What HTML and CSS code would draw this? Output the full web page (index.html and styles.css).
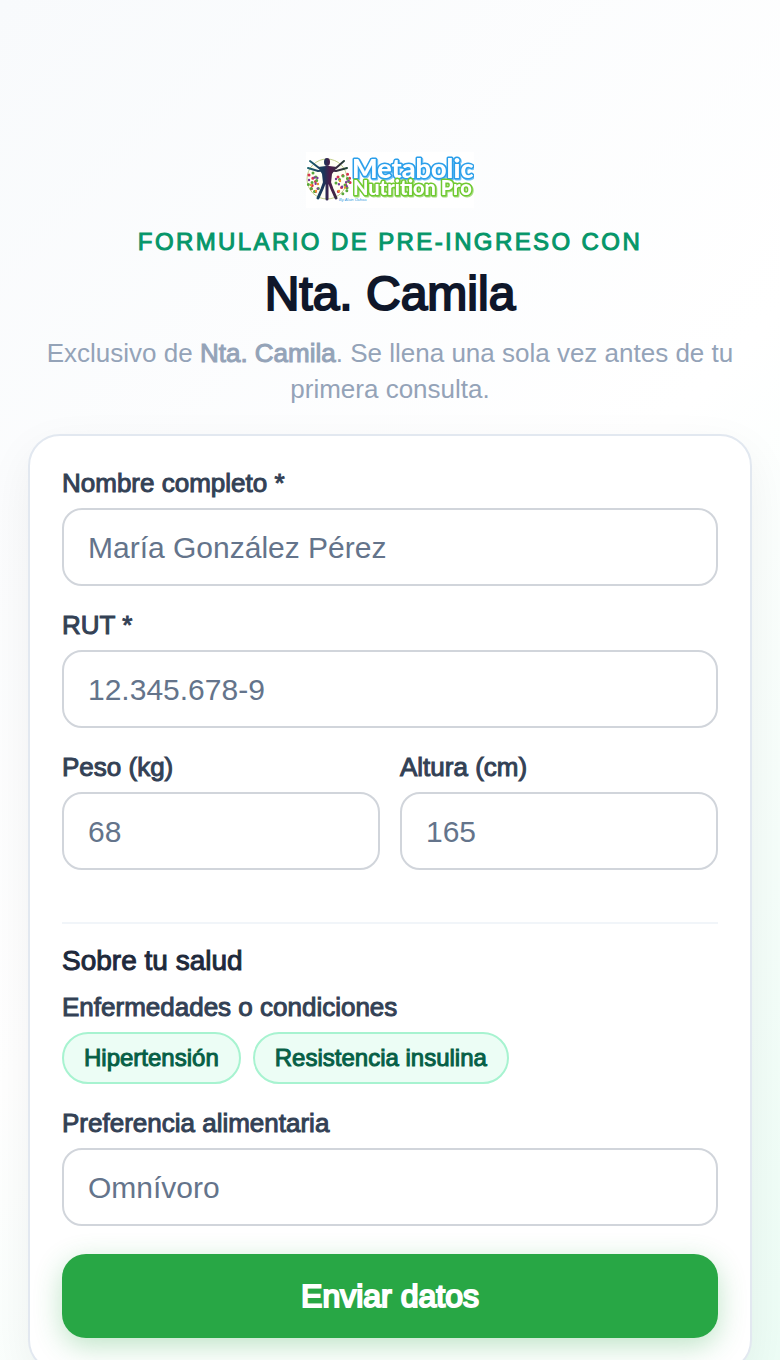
FILE: index.html
```
<!DOCTYPE html>
<html lang="es">
<head>
  <meta charset="UTF-8">
  <meta name="viewport" content="width=device-width, initial-scale=1.0">
  <title>Formulario de pre-ingreso</title>
  <link rel="stylesheet" href="styles.css">
</head>
<body>

  <main class="page">
    <header class="intro">
      <svg class="logo" viewBox="0 0 168 56" role="img" aria-label="Metabolic Nutrition Pro">
        <defs>
          <linearGradient id="bodyColor" gradientUnits="userSpaceOnUse" x1="2" x2="42" y1="0" y2="0">
            <stop offset="0" stop-color="#1d6470"/>
            <stop offset="0.4" stop-color="#1c3358"/>
            <stop offset="0.55" stop-color="#4b1c4a"/>
            <stop offset="1" stop-color="#1b4a34"/>
          </linearGradient>
        </defs>
        <rect width="168" height="56" fill="#fff"/>
        <circle cx="21" cy="27" r="20" fill="#fffef4" stroke="#c2cf8a" stroke-width="1"/>
        <!-- food dots -->
        <g fill="none" stroke-linecap="round">
          <path stroke="#d8324d" stroke-width="3" stroke-dasharray="0 5" d="M3 23l7 6-6 7 8 5M32 25l10-3 3 8-9 5-5 6"/>
          <path stroke="#58a839" stroke-width="3" stroke-dasharray="0 5" d="M7 21l5 7-10 4 6 8 5-4M30 31l7-7 7 4-6 6 5 3-8 6"/>
          <path stroke="#7a3b9b" stroke-width="2.4" stroke-dasharray="0 6" d="M3 28l9-4-3 10 5 5M30 27l5 9 8-9-4 13"/>
          <path stroke="#ef9130" stroke-width="2.4" stroke-dasharray="0 7" d="M5 33l7-1M10 39l3 4M34 29l6 3M33 39l7-4"/>
        </g>
        <!-- figure with open arms and legs -->
        <g fill="none" stroke="url(#bodyColor)" stroke-linecap="round" stroke-linejoin="round">
          <path stroke-width="2" d="M2 16l10 3 9-1 9 1 11-3M4 9l9 7 8 4 9-4 8-7"/>
          <path stroke-width="3" d="M19 29l-3 8-4 9M23 29l3 8 4 9M21 30v17"/>
        </g>
        <path fill="url(#bodyColor)" d="M12 15l8-1h3l8 1-5 7-1 9h-8l-1-9z"/>
        <ellipse cx="21" cy="10" rx="3" ry="4" fill="url(#bodyColor)"/>
        <g class="logo-word">
          <text x="46" y="26" class="logo-blue">Metabolic</text>
          <text x="47" y="43" class="logo-green">Nutrition Pro</text>
        </g>
        <text x="33" y="49" class="logo-by">By Alain Ochoa</text>
      </svg>
      <p class="eyebrow">Formulario de pre-ingreso con</p>
      <h1>Nta. Camila</h1>
      <p class="lead">Exclusivo de <strong>Nta. Camila</strong>. Se llena una sola vez antes de tu primera consulta.</p>
    </header>

    <form class="card">
      <div class="field">
        <label for="nombre">Nombre completo *</label>
        <input type="text" id="nombre" placeholder="María González Pérez">
      </div>
      <div class="field">
        <label for="rut">RUT *</label>
        <input type="text" id="rut" placeholder="12.345.678-9">
      </div>
      <div class="row">
        <div class="field">
          <label for="peso">Peso (kg)</label>
          <input type="text" id="peso" inputmode="decimal" placeholder="68">
        </div>
        <div class="field">
          <label for="altura">Altura (cm)</label>
          <input type="text" id="altura" inputmode="decimal" placeholder="165">
        </div>
      </div>

      <section class="health">
        <h2>Sobre tu salud</h2>
        <p class="label">Enfermedades o condiciones</p>
        <div class="chips">
          <span class="chip">Hipertensión</span>
          <span class="chip">Resistencia insulina</span>
        </div>
        <div class="field">
          <label for="preferencia">Preferencia alimentaria</label>
          <input type="text" id="preferencia" placeholder="Omnívoro">
        </div>
      </section>

      <button type="button" class="submit">Enviar datos</button>
    </form>
  </main>

</body>
</html>
```
FILE: styles.css
```
* {
  box-sizing: border-box;
}
body {
  margin: 0;
  min-height: 100vh;
  font-family: "Liberation Sans", Arial, sans-serif;
  color: #0f172a;
  background: linear-gradient(135deg, #f8fafc 0%, #ffffff 50%, #ecfdf5 100%);
}
h1, h2, p {
  margin: 0;
  font-weight: 400;
}
.page {
  padding: 152px 28px 28px;
}
.intro {
  text-align: center;
  margin-bottom: 27px;
}
.logo {
  display: block;
  width: 168px;
  height: 56px;
  margin: 0 auto 16px;
}
.logo-word {
  font-family: Lato, sans-serif;
  font-weight: 900;
  stroke-width: 3px;
  stroke-linejoin: round;
  paint-order: stroke;
  fill: #fff;
}
.logo-blue {
  font-size: 27px;
  stroke: #2b9fea;
  filter: drop-shadow(1px 1px 0 #7cc6f4);
}
.logo-green {
  font-size: 20px;
  stroke: #70c932;
  filter: drop-shadow(1px 1px 0 #a9df85);
}
.logo-by {
  font-size: 4px;
  font-style: italic;
  fill: #2f9be0;
}
.eyebrow {
  font-size: 24px;
  line-height: 36px;
  letter-spacing: 0.1em;
  text-transform: uppercase;
  color: #059669;
  -webkit-text-stroke: 1px;
}
h1 {
  margin: 4px 0 11px;
  font-size: 48px;
  line-height: 60px;
  -webkit-text-stroke: 2px;
}
.lead {
  font-size: 26px;
  line-height: 36px;
  color: #94a3b8;
}
.lead strong {
  font-weight: 400;
  -webkit-text-stroke: 1px;
}
.card {
  padding: 32px;
  border: 2px solid #e2e8f0;
  border-radius: 32px;
  background: #fff;
  box-shadow: 0 16px 48px rgba(15, 23, 42, 0.06);
}
.field {
  margin-bottom: 24px;
}
label, .label {
  display: block;
  margin-bottom: 10px;
  font-size: 26px;
  line-height: 30px;
  color: #334155;
  -webkit-text-stroke: 1px;
}
input {
  display: block;
  width: 100%;
  height: 78px;
  padding: 2px 24px 0;
  border: 2px solid #d1d5db;
  border-radius: 20px;
  background: #fff;
  font-family: inherit;
  font-size: 30px;
  color: #0f172a;
}
input::placeholder {
  color: #64748b;
}
.row {
  display: grid;
  grid-template-columns: 1fr 1fr;
  gap: 20px;
}
.health {
  margin-top: 28px;
  padding-top: 20px;
  border-top: 2px solid #f1f5f9;
}
h2 {
  margin-bottom: 14px;
  font-size: 28px;
  line-height: 34px;
  color: #1e293b;
  -webkit-text-stroke: 1px;
}
.chips {
  display: flex;
  flex-wrap: wrap;
  gap: 12px;
  margin-bottom: 24px;
}
.chip {
  padding: 8px 20px;
  border: 2px solid #a7f3d0;
  border-radius: 26px;
  background: #ecfdf5;
  font-size: 24px;
  line-height: 32px;
  color: #065f46;
  -webkit-text-stroke: 1px;
}
.submit {
  display: block;
  width: 100%;
  height: 84px;
  margin-top: 28px;
  border: 0;
  border-radius: 24px;
  background: #28a745;
  box-shadow: 0 8px 28px rgba(40, 167, 69, 0.3);
  font-family: inherit;
  font-size: 32px;
  color: #fff;
  -webkit-text-stroke: 2px;
  cursor: pointer;
}
```
